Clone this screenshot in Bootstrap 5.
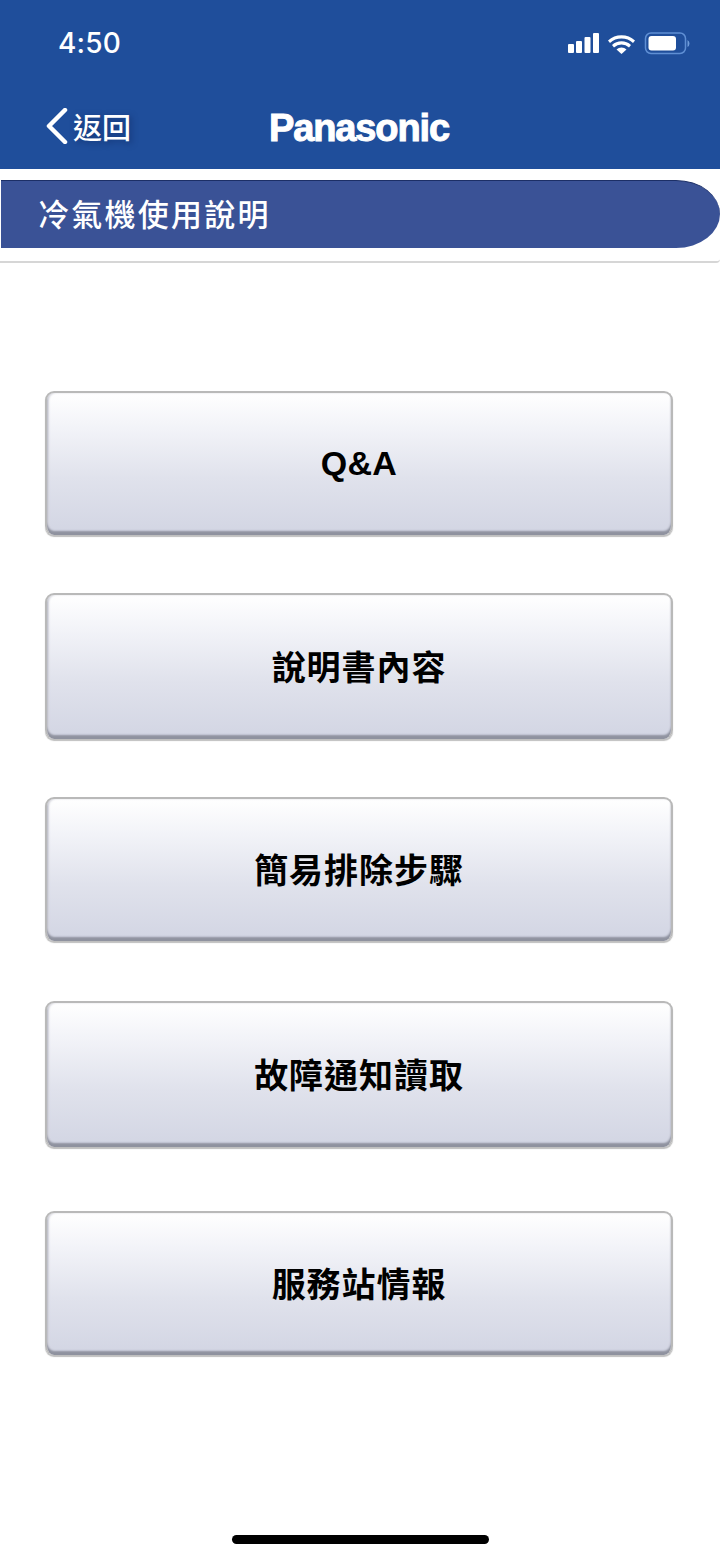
<!DOCTYPE html>
<html lang="zh-Hant">
<head>
<meta charset="utf-8">
<title>冷氣機使用說明</title>
<link href="https://cdn.jsdelivr.net/npm/bootstrap@5.3.0/dist/css/bootstrap.min.css" rel="stylesheet">
<style>
html,body{margin:0;background:#fff}
.screen{width:720px;height:1558px;overflow:hidden;position:relative;font-family:"Liberation Sans","Noto Sans CJK TC",sans-serif}
.topbar{background:#1f4e9b;height:169px;color:#fff}
.statusrow{height:86px;padding:26px 29px 0 58px}
.clock{font-family:Inter,"Liberation Sans",sans-serif;font-size:28px;line-height:34px;font-weight:500;letter-spacing:.2px}
.statusicons{margin-top:6px}
.navrow{height:83px;position:relative}
.backlink{color:#fff;text-decoration:none;font-size:29px;line-height:34px;font-family:"Noto Sans CJK TC",sans-serif;font-weight:500;padding-left:45px;padding-top:22px;text-shadow:2px 2px 6px rgba(10,30,80,.5)}
.backlink svg{margin-right:4px}
.brandmark{position:absolute;left:0;right:2px;top:19px;text-align:center;font-family:"Liberation Sans",sans-serif;font-weight:700;font-size:38px;line-height:46px;letter-spacing:-1.1px;-webkit-text-stroke:1px #fff}
.titlewrap{height:94px;padding-top:11px;border-bottom:2px solid #d6d6d6;border-bottom-right-radius:4px}
.titleband{height:68px;background:#3a5296;border-top:1px solid #1c2f66;margin-left:1px;border-radius:0 44px 44px 0/0 34px 34px 0;color:#fff;font-size:31px;line-height:64px;padding-left:37px;font-family:"Noto Sans CJK TC",sans-serif;font-weight:500;letter-spacing:2.25px;white-space:nowrap}
.menulist{padding:128px 47px 0 45px}
.menubtn{display:flex;align-items:center;justify-content:center;width:628px;background:linear-gradient(#fff 0%,#f2f3f8 25%,#e0e2ec 60%,#d2d5e3 100%);border:1px solid #b9b9b9;border-width:2px 2px 0 2px;border-radius:9px;box-shadow:inset 0 -4px 2px #8f929f,inset 2px 0 2px #d5d6de,0 2px 1px #bfbfbf;color:#000;font-weight:700;font-size:34px;font-family:"Noto Sans CJK TC",sans-serif;letter-spacing:.95px;padding:0 0 4px 0}
.menubtn:hover,.menubtn:active{color:#000;background:linear-gradient(#fff 0%,#f2f3f8 25%,#e0e2ec 60%,#d2d5e3 100%);border-color:#b9b9b9}
.latinlabel{font-family:"Liberation Sans",sans-serif;letter-spacing:.3px;padding-top:2px}
.tall-a{height:144px;margin-bottom:58px}
.tall-b{height:146px;margin-bottom:58px}
.tall-c{height:144px;margin-bottom:60px}
.tall-d{height:146px;margin-bottom:64px}
.tall-e{height:144px}
.homebar{position:absolute;left:232px;top:1535px;width:257px;height:9px;background:#000;border-radius:5px}
</style>
</head>
<body>
<div class="screen">
  <header class="topbar">
    <div class="statusrow d-flex justify-content-between align-items-start">
      <span class="clock">4:50</span>
      <span class="statusicons d-flex align-items-center">
        <svg width="124" height="24" viewBox="0 0 124 24" fill="#fff" aria-hidden="true">
          <rect x="1" y="12" width="6" height="9" rx="1"/>
          <rect x="9" y="9" width="6" height="12" rx="1"/>
          <rect x="17.500" y="5" width="6" height="16" rx="1"/>
          <rect x="26" y="1" width="6" height="20" rx="1"/>
          <path d="M41 8.500a20 20 0 0 1 27 0l-2 2.500a17 17 0 0 0-23 0z"/>
          <path d="M45 13a14 14 0 0 1 19 0l-2 2.500a11 11 0 0 0-15 0z"/>
          <path d="M49.500 17.500a7.500 7.500 0 0 1 10 0l-5 4.500z"/>
          <rect x="78.500" y="1" width="40" height="20.500" rx="5.500" fill="none" stroke="#5f8fd4" stroke-width="1.500"/>
          <rect x="81.500" y="4" width="27.500" height="14.500" rx="3"/>
          <path d="M120.500 8v7a4 4 0 0 0 2-3.500 4 4 0 0 0-2-3.500z" fill="#6f9bd9"/>
        </svg>
      </span>
    </div>
    <div class="navrow">
      <a href="#" class="backlink d-inline-flex align-items-center">
        <svg width="24" height="36" viewBox="0 0 24 36" fill="none" stroke="#fff" stroke-width="4.500" stroke-linecap="round" stroke-linejoin="round" aria-hidden="true"><path d="M20 2 4 18l16 16"/></svg>
        返回
      </a>
      <div class="brandmark">Panasonic</div>
    </div>
  </header>
  <div class="titlewrap">
    <div class="titleband">冷氣機使用說明</div>
  </div>
  <main class="menulist">
    <a href="#" class="btn menubtn tall-a"><span class="latinlabel">Q&amp;A</span></a>
    <a href="#" class="btn menubtn tall-b">說明書內容</a>
    <a href="#" class="btn menubtn tall-c">簡易排除步驟</a>
    <a href="#" class="btn menubtn tall-d">故障通知讀取</a>
    <a href="#" class="btn menubtn tall-e">服務站情報</a>
  </main>
  <div class="homebar"></div>
</div>
<script src="https://cdn.jsdelivr.net/npm/bootstrap@5.3.0/dist/js/bootstrap.bundle.min.js"></script>
</body>
</html>
